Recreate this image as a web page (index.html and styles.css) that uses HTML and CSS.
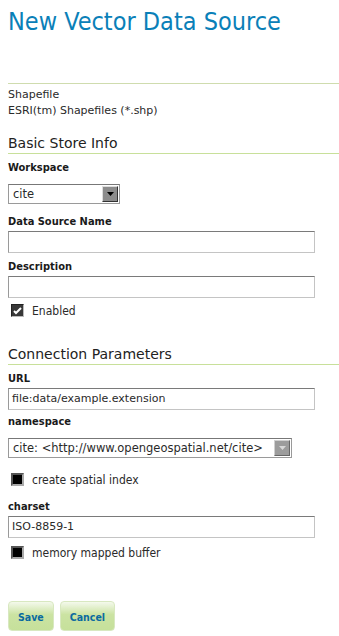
FILE: index.html
```html
<!DOCTYPE html>
<html lang="en">
<head>
<meta charset="UTF-8">
<title>New Vector Data Source</title>
<link rel="stylesheet" href="styles.css">
</head>
<body>
<h1 class="page-title">New Vector Data Source</h1>

<div class="store-type">
    <div>Shapefile</div>
    <div>ESRI(tm) Shapefiles (*.shp)</div>
</div>

<h2 class="section">Basic Store Info</h2>

<div class="field with-select">
    <div class="label">Workspace</div>
    <div class="select ws">
        <span class="select-value">cite</span>
        <span class="select-btn"><svg width="7" height="4" viewBox="0 0 7 4"><path d="M0 0h7L3.5 4z" fill="#000"/></svg></span>
    </div>
</div>

<div class="field after-select">
    <div class="label">Data Source Name</div>
    <div class="input"></div>
</div>

<div class="field">
    <div class="label">Description</div>
    <div class="input"></div>
</div>

<div class="check-row">
    <span class="check on"><svg width="9" height="8" viewBox="0 0 9 8"><path d="M1 4l2 2 5-5" fill="none" stroke="#fff" stroke-width="2"/></svg></span>
    <span>Enabled</span>
</div>

<h2 class="section spaced">Connection Parameters</h2>

<div class="field">
    <div class="label">URL</div>
    <div class="input">file:data/example.extension</div>
</div>

<div class="field with-select tight">
    <div class="label">namespace</div>
    <div class="select ns">
        <span class="select-value">cite: &lt;http://www.opengeospatial.net/cite&gt;</span>
        <span class="select-btn dim"><svg width="7" height="4" viewBox="0 0 7 4"><path d="M0 0h7L3.5 4z" fill="#d8d8d8"/></svg></span>
    </div>
</div>

<div class="check-row after-select">
    <span class="check"></span>
    <span>create spatial index</span>
</div>

<div class="field loose">
    <div class="label">charset</div>
    <div class="input">ISO-8859-1</div>
</div>

<div class="check-row">
    <span class="check"></span>
    <span>memory mapped buffer</span>
</div>

<div class="buttons">
    <button class="button">Save</button>
    <button class="button">Cancel</button>
</div>
</body>
</html>
```

FILE: styles.css
```css
body {
    margin: 0;
    padding: 0 0 0 8px;
    font-family: 'DejaVu Sans', sans-serif;
    font-size: 11px;
    color: #2a2a2a;
    background: #fff;
}
.page-title {
    font-family: 'DejaVu Sans Condensed', 'DejaVu Sans', sans-serif;
    font-weight: normal;
    font-size: 25px;
    color: #0a80b8;
    margin: 0;
    padding-top: 7px;
    height: 76px;
}
.store-type {
    border-top: 1px solid #cfdcae;
    padding-top: 3px;
    line-height: 16px;
}
.section {
    font-size: 14px;
    font-weight: normal;
    color: #222;
    margin: 16px 0 0 0;
    padding-bottom: 1px;
    border-bottom: 1px solid #c8e09a;
    line-height: 17px;
}
.section.spaced {
    margin-top: 29px;
}
.field {
    margin-top: 7px;
}
.field.after-select {
    margin-top: 11px;
}
.field.tight {
    margin-top: 5px;
}
.field.loose {
    margin-top: 14px;
}
.label {
    font-family: 'DejaVu Sans Condensed', 'DejaVu Sans', sans-serif;
    font-weight: bold;
    font-size: 11px;
    line-height: 13px;
    margin-bottom: 3px;
    color: #1a1a1a;
}
.with-select .label {
    margin-bottom: 10px;
}
.input {
    box-sizing: border-box;
    width: 307px;
    height: 22px;
    border: 1px solid #c4c4c4;
    border-top-color: #7a7a7a;
    border-left-color: #9a9a9a;
    padding: 3px 0 0 3px;
    font-size: 11px;
    line-height: 14px;
}
.select {
    box-sizing: border-box;
    display: flex;
    align-items: center;
    height: 20px;
    border: 1px solid #9a9a9a;
    border-top-color: #777;
    padding: 1px;
}
.select.ws {
    width: 112px;
}
.select.ns {
    width: 284px;
}
.select-value {
    flex: 1;
    padding-left: 3px;
    font-size: 11.5px;
    white-space: nowrap;
}
.select-btn {
    box-sizing: border-box;
    width: 16px;
    height: 16px;
    background: #8c8c8c;
    border: 1px solid #333;
    border-top-color: #ddd;
    border-left-color: #ddd;
    display: flex;
    align-items: center;
    justify-content: center;
}
.select-btn.dim {
    background: #9c9c9c;
    border-color: #d0d0d0 #666 #666 #d0d0d0;
}
.check-row {
    display: flex;
    align-items: center;
    gap: 8px;
    height: 13px;
    margin-top: 6px;
    padding-left: 3px;
    font-family: 'DejaVu Sans Condensed', 'DejaVu Sans', sans-serif;
    font-size: 12px;
}
.check-row.after-select {
    margin-top: 15px;
}
.field.loose + .check-row {
    margin-top: 8px;
}
.check {
    box-sizing: border-box;
    width: 13px;
    height: 13px;
    background: #000;
    border: 2px solid #555;
    border-bottom-color: #aaa;
    border-right-color: #aaa;
    display: flex;
    align-items: center;
    justify-content: center;
}
.check.on {
    background: #383838;
    border-color: #222 #bbb #bbb #222;
    border-width: 1px;
}
.buttons {
    display: flex;
    gap: 6px;
    margin-top: 42px;
}
.button {
    height: 30px;
    padding: 2px 9px 0;
    border: 1px solid #d8e8c0;
    border-radius: 4px;
    background: linear-gradient(#f4f9ec 0%, #cbe3a2 45%, #c6e09b 100%);
    color: #0a6aa0;
    font-family: 'DejaVu Sans Condensed', 'DejaVu Sans', sans-serif;
    font-weight: bold;
    font-size: 10.5px;
}
```
